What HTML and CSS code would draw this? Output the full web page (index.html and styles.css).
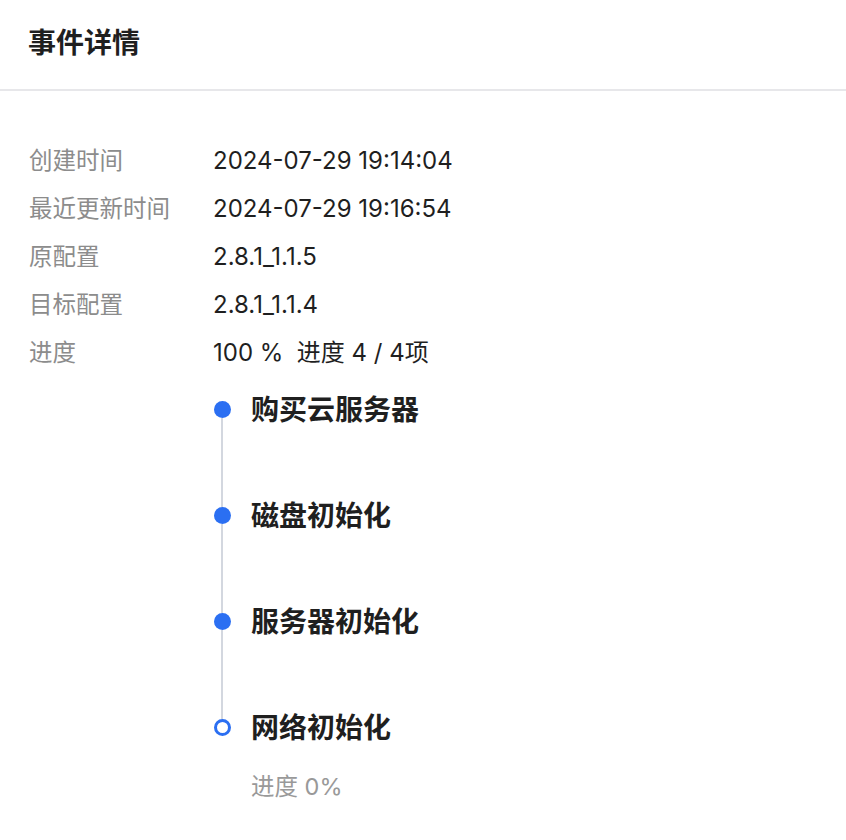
FILE: index.html
```html
<!DOCTYPE html>
<html lang="zh-CN">
<head>
  <meta charset="UTF-8" />
  <meta name="viewport" content="width=device-width, initial-scale=1.0" />
  <title>事件详情</title>
  <link rel="stylesheet" href="styles.css">
</head>
<body>

<header class="page-head">
  <h1>事件详情</h1>
</header>

<div class="detail">
  <dl class="info">
    <dt>创建时间</dt>
    <dd>2024-07-29 19:14:04</dd>
    <dt>最近更新时间</dt>
    <dd>2024-07-29 19:16:54</dd>
    <dt>原配置</dt>
    <dd>2.8.1_1.1.5</dd>
    <dt>目标配置</dt>
    <dd>2.8.1_1.1.4</dd>
    <dt>进度</dt>
    <dd>100 %&nbsp;&nbsp;进度 4 / 4项</dd>
  </dl>

  <ul class="steps">
    <li class="step done">
      <div class="rail"><span class="dot"></span><span class="line"></span></div>
      <div class="step-body"><h3>购买云服务器</h3></div>
    </li>
    <li class="step done">
      <div class="rail"><span class="dot"></span><span class="line"></span></div>
      <div class="step-body"><h3>磁盘初始化</h3></div>
    </li>
    <li class="step done">
      <div class="rail"><span class="dot"></span><span class="line"></span></div>
      <div class="step-body"><h3>服务器初始化</h3></div>
    </li>
    <li class="step current">
      <div class="rail"><span class="dot"></span></div>
      <div class="step-body">
        <h3>网络初始化</h3>
        <p class="step-sub">进度 0%</p>
      </div>
    </li>
  </ul>
</div>

</body>
</html>
```

FILE: styles.css
```css
* {
  box-sizing: border-box;
  margin: 0;
  padding: 0;
}
body {
  font-family: 'Inter', 'Noto Sans CJK SC', sans-serif;
  background: #fff;
  color: #1f1f1f;
}
.page-head {
  height: 91px;
  padding: 0 28px;
  border-bottom: 2px solid #e7e7ea;
  display: flex;
  align-items: center;
  padding-bottom: 8px;
}
.page-head h1 {
  font-size: 28px;
  font-weight: 700;
  color: #1f1f1f;
}
.detail {
  padding: 46px 0 0 29px;
}
.info {
  display: grid;
  grid-template-columns: 184px 1fr;
  line-height: 48px;
  font-size: 24px;
}
.info dt {
  color: #8c8c8c;
  font-size: 23.5px;
}
.info dd {
  color: #1f1f1f;
}
.steps {
  list-style: none;
  margin: 13px 0 0 184px;
}
.step {
  display: flex;
  gap: 20px;
}
.rail {
  width: 18px;
  display: flex;
  flex-direction: column;
  align-items: center;
  padding-top: 11px;
}
.dot {
  width: 17px;
  height: 17px;
  border-radius: 50%;
  background: #2b6ff2;
  flex: none;
}
.step.current .dot {
  background: #fff;
  border: 3.5px solid #2b6ff2;
}
.line {
  flex: 1;
  width: 2px;
  background: #d3d7df;
  margin-bottom: -11px;
}
.step-body {
  padding-bottom: 66px;
}
.step.current .step-body {
  padding-bottom: 0;
}
.step-body h3 {
  font-size: 28px;
  font-weight: 700;
  line-height: 40px;
  color: #1f1f1f;
}
.step-sub {
  margin-top: 21px;
  font-size: 23.5px;
  line-height: 36px;
  color: #999;
}
```
